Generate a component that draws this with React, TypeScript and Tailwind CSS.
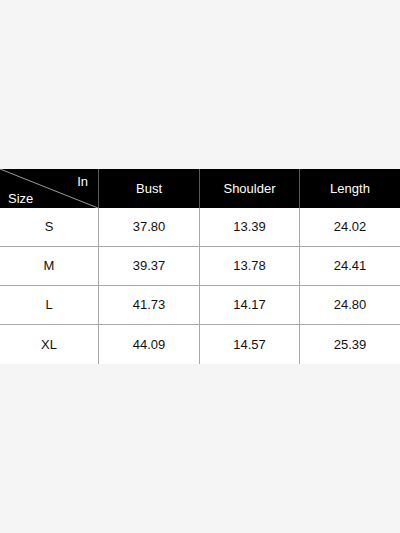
import React from 'react';

const rows = [
  ['S', '37.80', '13.39', '24.02'],
  ['M', '39.37', '13.78', '24.41'],
  ['L', '41.73', '14.17', '24.80'],
  ['XL', '44.09', '14.57', '25.39'],
];

export default function App() {
  return (
    <div
      className="flex h-[533px] w-[400px] items-center bg-[#f5f5f5]"
      style={{ fontFamily: '"Liberation Sans", Arial, sans-serif' }}
    >
      <div className="w-full text-[13px]">
        {/* Header */}
        <div className="grid h-[39px] grid-cols-[99px_101px_100px_100px] bg-black text-white">
          <div className="relative border-r border-[#5a5a5a]">
            <svg className="absolute inset-0 h-full w-full" viewBox="0 0 98 39" preserveAspectRatio="none">
              <line x1="0" y1="0" x2="98" y2="39" stroke="#9a9a9a" strokeWidth="1" />
            </svg>
            <span className="absolute right-[10px] top-[3px]">In</span>
            <span className="absolute bottom-0 left-[8px]">Size</span>
          </div>
          <div className="flex items-center justify-center border-r border-[#5a5a5a]">Bust</div>
          <div className="flex items-center justify-center border-r border-[#5a5a5a]">Shoulder</div>
          <div className="flex items-center justify-center">Length</div>
        </div>

        {/* Body */}
        {rows.map((r, i) => (
          <div
            key={r[0]}
            className={`grid h-[39px] grid-cols-[99px_101px_100px_100px] bg-white text-[#111] ${
              i < rows.length - 1 ? 'border-b border-[#a8a8a8]' : ''
            }`}
          >
            {r.map((c, j) => (
              <div
                key={j}
                className={`flex items-center justify-center ${j < 3 ? 'border-r border-[#a8a8a8]' : ''}`}
              >
                {c}
              </div>
            ))}
          </div>
        ))}
      </div>
    </div>
  );
}
